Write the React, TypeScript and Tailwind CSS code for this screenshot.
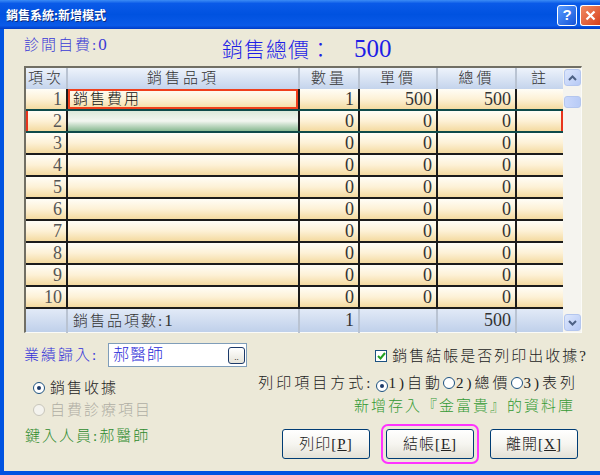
import React from "react";

type Row = { n: number; item: string; qty: number; price: number; total: number };

const rows: Row[] = Array.from({ length: 10 }, (_, i) =>
  i === 0
    ? { n: 1, item: "銷售費用", qty: 1, price: 500, total: 500 }
    : { n: i + 1, item: "", qty: 0, price: 0, total: 0 }
);

const font = "font-['Liberation_Serif','Noto_Sans_CJK_TC',serif]";
const cols = "grid grid-cols-[42px_232px_60px_78px_79px_46px]";
const cream = "bg-gradient-to-b from-[#fffdf6] via-[#fdf1d6] to-[#f4daa0]";
const blueHead = "bg-gradient-to-b from-[#eef3fb] to-[#c4d4ec]";

function Radio({ on, disabled }: { on?: boolean; disabled?: boolean }) {
  return (
    <span
      className={
        "inline-flex h-[12px] w-[12px] shrink-0 items-center justify-center rounded-full border " +
        (disabled ? "border-[#c8c6bb] bg-[#f4f3ee]" : "border-[#1c5180] bg-white")
      }
    >
      {on && <span className="h-[4px] w-[4px] rounded-full bg-[#1c3a6a]" />}
    </span>
  );
}

function ScrollBtn({ up }: { up?: boolean }) {
  return (
    <div className="flex h-[17px] w-[17px] items-center justify-center rounded-[3px] border border-[#b4c6ee] bg-gradient-to-br from-[#dde7fd] to-[#b6c9f5]">
      <svg width="9" height="6" viewBox="0 0 9 6">
        <path
          d={up ? "M1 5 L4.5 1.5 L8 5" : "M1 1 L4.5 4.5 L8 1"}
          fill="none"
          stroke="#4d6185"
          strokeWidth="2"
        />
      </svg>
    </div>
  );
}

function XpButton({ label, hot }: { label: string; hot: string }) {
  return (
    <button
      className={
        "flex h-[30px] w-[88px] items-center justify-center rounded-[3px] border border-[#003c74] bg-gradient-to-b from-white via-[#f6f5f0] to-[#e3e1d6] text-[15px] font-light tracking-[1px] text-[#222] " +
        font
      }
    >
      {label}[<span className="underline">{hot}</span>]
    </button>
  );
}

export default function App() {
  return (
    <div className={"flex h-[475px] w-[600px] flex-col overflow-hidden bg-[#0053e1] font-light " + font}>
      {/* title bar */}
      <div className="flex h-[29px] shrink-0 items-center bg-[linear-gradient(180deg,#3c8cf5_0%,#0a5ae8_12%,#0052e0_50%,#0a5ae8_88%,#003cc8_100%)] pl-[6px]">
        <span className="font-['Noto_Sans_CJK_TC',sans-serif] text-[12px] font-bold text-white [text-shadow:1px_1px_0_#0a2a80]">
          銷售系統:新增模式
        </span>
        <div className="ml-auto flex gap-[3px] pt-[1px]">
          <div className="flex h-[21px] w-[20px] items-center justify-center rounded-[3px] border border-white bg-gradient-to-br from-[#5a9cff] to-[#1652d8] font-['Liberation_Sans',sans-serif] text-[15px] font-bold text-white">
            ?
          </div>
          <div className="flex h-[21px] w-[20px] items-center justify-center rounded-l-[3px] border border-r-0 border-white bg-gradient-to-br from-[#f08a62] to-[#d7401a]">
            <svg width="11" height="11" viewBox="0 0 11 11">
              <path d="M1.5 1.5 L9.5 9.5 M9.5 1.5 L1.5 9.5" stroke="white" strokeWidth="2.2" />
            </svg>
          </div>
        </div>
      </div>

      {/* body */}
      <div className="ml-[4px] flex h-[442px] flex-col bg-[#ece9d8] pl-[20px]">
        {/* top info */}
        <div className="flex h-[37px] shrink-0 items-start">
          <span className="mt-[8px] w-[198px] text-[15px] leading-[16px] tracking-[2px] text-[#3a3ad6]">
            診間自費:<span className="text-[17px]">0</span>
          </span>
          <span className="mt-[9px] text-[21px] leading-[24px] tracking-[1px] text-[#1e1ee6]">
            銷售總價：
          </span>
          <span className="ml-[22px] mt-[8px] text-[25px] leading-[24px] text-[#1e1ee6]">500</span>
        </div>

        {/* grid */}
        <div className="flex h-[267px] w-[558px] shrink-0 border-l-2 border-t-2 border-b border-r border-l-[#716f64] border-t-[#716f64] border-b-[#fbfbf8] border-r-[#fbfbf8] bg-white">
          <div className="flex w-[537px] flex-col">
            {/* header */}
            <div className={cols + " h-[21px] " + blueHead}>
              {["項次", "銷售品項", "數量", "單價", "總價", "註"].map((h, i) => (
                <div
                  key={h}
                  className={
                    "flex items-center justify-center text-[15px] leading-[21px] tracking-[3px] text-[#333] " +
                    (i < 5 ? "border-r-2 border-r-[#b9c3d2]" : "")
                  }
                >
                  {h}
                </div>
              ))}
            </div>
            {/* rows */}
            {rows.map((r, i) => {
              const sel = i === 1;
              const line = i <= 1 ? "border-b-[#0e4a4a]" : "border-b-[#1b1b1b]";
              return (
                <div key={r.n} className={cols + " h-[22px] border-b-2 " + line}>
                  <div
                    className={
                      "border-r-2 border-r-[#1b1b1b] pr-[4px] text-right text-[18px] leading-[20px] text-[#555] " +
                      cream +
                      (sel ? " border-l-2 border-l-[#e8341c]" : "")
                    }
                  >
                    {r.n}
                  </div>
                  <div
                    className={
                      "border-r-2 border-r-[#1b1b1b] pl-[5px] text-[15px] leading-[20px] tracking-[2px] text-[#111] " +
                      (sel
                        ? "bg-gradient-to-b from-[#dce9da] via-[#f2f6f0] to-[#88b992]"
                        : cream) +
                      (i === 0 ? " shadow-[inset_0_0_0_2px_#f0401c]" : "")
                    }
                  >
                    {r.item}
                  </div>
                  {[r.qty, r.price, r.total].map((v, j) => (
                    <div
                      key={j}
                      className={
                        "border-r-2 border-r-[#1b1b1b] pr-[4px] text-right text-[18px] leading-[20px] text-[#333] " +
                        cream
                      }
                    >
                      {v}
                    </div>
                  ))}
                  <div className={cream + (sel ? " border-r-2 border-r-[#e8341c]" : "")} />
                </div>
              );
            })}
            {/* footer */}
            <div className={cols + " h-[23px] bg-gradient-to-b from-[#e2eaf7] to-[#bfd0ea]"}>
              <div className="border-r-2 border-r-[#b9c3d2]" />
              <div className="border-r-2 border-r-[#b9c3d2] pl-[5px] text-[15px] leading-[23px] tracking-[2px] text-[#333]">
                銷售品項數:<span className="text-[17px]">1</span>
              </div>
              <div className="border-r-2 border-r-[#b9c3d2] pr-[4px] text-right text-[18px] leading-[23px] text-[#333]">
                1
              </div>
              <div className="border-r-2 border-r-[#b9c3d2]" />
              <div className="border-r-2 border-r-[#b9c3d2] pr-[4px] text-right text-[18px] leading-[23px] text-[#333]">
                500
              </div>
              <div />
            </div>
          </div>
          {/* scrollbar */}
          <div className="flex w-[18px] flex-col items-center bg-[#f5f4ef] pt-[1px] pb-[1px]">
            <ScrollBtn up />
            <div className="mt-[10px] h-[12px] w-[17px] rounded-[3px] border border-[#b4c6ee] bg-gradient-to-r from-[#cad8fb] to-[#b8cbf6]" />
            <div className="flex-1" />
            <ScrollBtn />
          </div>
        </div>

        {/* bottom */}
        <div className="flex flex-1 justify-between">
          <div className="flex flex-col">
            <div className="mt-[10px] flex h-[24px] items-center">
              <span className="w-[84px] text-[15px] tracking-[2px] text-[#3030d8]">業績歸入:</span>
              <div className="flex h-[24px] w-[139px] items-center border border-[#7f9db9] bg-white pl-[4px] pr-[1px]">
                <span className="text-[16px] tracking-[1px] text-[#2a2ad8]">郝醫師</span>
                <div className="ml-auto flex h-[17px] w-[17px] items-end justify-center rounded-[3px] border border-[#1c3a6a] bg-gradient-to-b from-white to-[#e6e4da] pb-[1px] text-[9px] leading-[9px] text-black">
                  ..
                </div>
              </div>
            </div>
            <div className="ml-[9px] mt-[11px] flex h-[20px] items-center gap-[5px]">
              <Radio on />
              <span className="text-[15px] tracking-[2px] text-[#222]">銷售收據</span>
            </div>
            <div className="ml-[9px] mt-[2px] flex h-[20px] items-center gap-[5px]">
              <Radio disabled />
              <span className="text-[15px] tracking-[2px] text-[#b0aea4]">自費診療項目</span>
            </div>
            <div className="ml-[1px] mt-[6px] flex h-[20px] items-center text-[15px] tracking-[2px] text-[#2e8b2e]">
              鍵入人員:郝醫師
            </div>
          </div>

          <div className="flex flex-col items-end">
            <div className="mr-[12px] mt-[13px] flex h-[20px] items-center gap-[5px]">
              <span className="flex h-[12px] w-[12px] items-center justify-center border border-[#1c5180] bg-white">
                <svg width="9" height="8" viewBox="0 0 9 8">
                  <path d="M1 4 L3.5 6.5 L8 1" fill="none" stroke="#21a121" strokeWidth="2" />
                </svg>
              </span>
              <span className="text-[15px] tracking-[2px] text-[#222]">銷售結帳是否列印出收據?</span>
            </div>
            <div className="mr-[22px] mt-[7px] flex h-[20px] items-center text-[15px] tracking-[3px] text-[#222]">
              <span>列印項目方式:</span>
              <span className="ml-[2px]"><Radio on /></span>
              <span className="ml-[1px]">1)自動</span>
              <Radio />
              <span className="ml-[1px]">2)總價</span>
              <Radio />
              <span className="ml-[1px]">3)表列</span>
            </div>
            <div className="mr-[25px] mt-[3px] flex h-[20px] items-center text-[15px] tracking-[2px] text-[#339933]">
              新增存入『金富貴』的資料庫
            </div>
            <div className="mr-[22px] mt-[13px] flex gap-[16px]">
              <XpButton label="列印" hot="P" />
              <div className="rounded-[2px] outline-2 outline-offset-[3px] outline-[#ff33ff]">
                <XpButton label="結帳" hot="E" />
              </div>
              <XpButton label="離開" hot="X" />
            </div>
          </div>
        </div>
      </div>
    </div>
  );
}
